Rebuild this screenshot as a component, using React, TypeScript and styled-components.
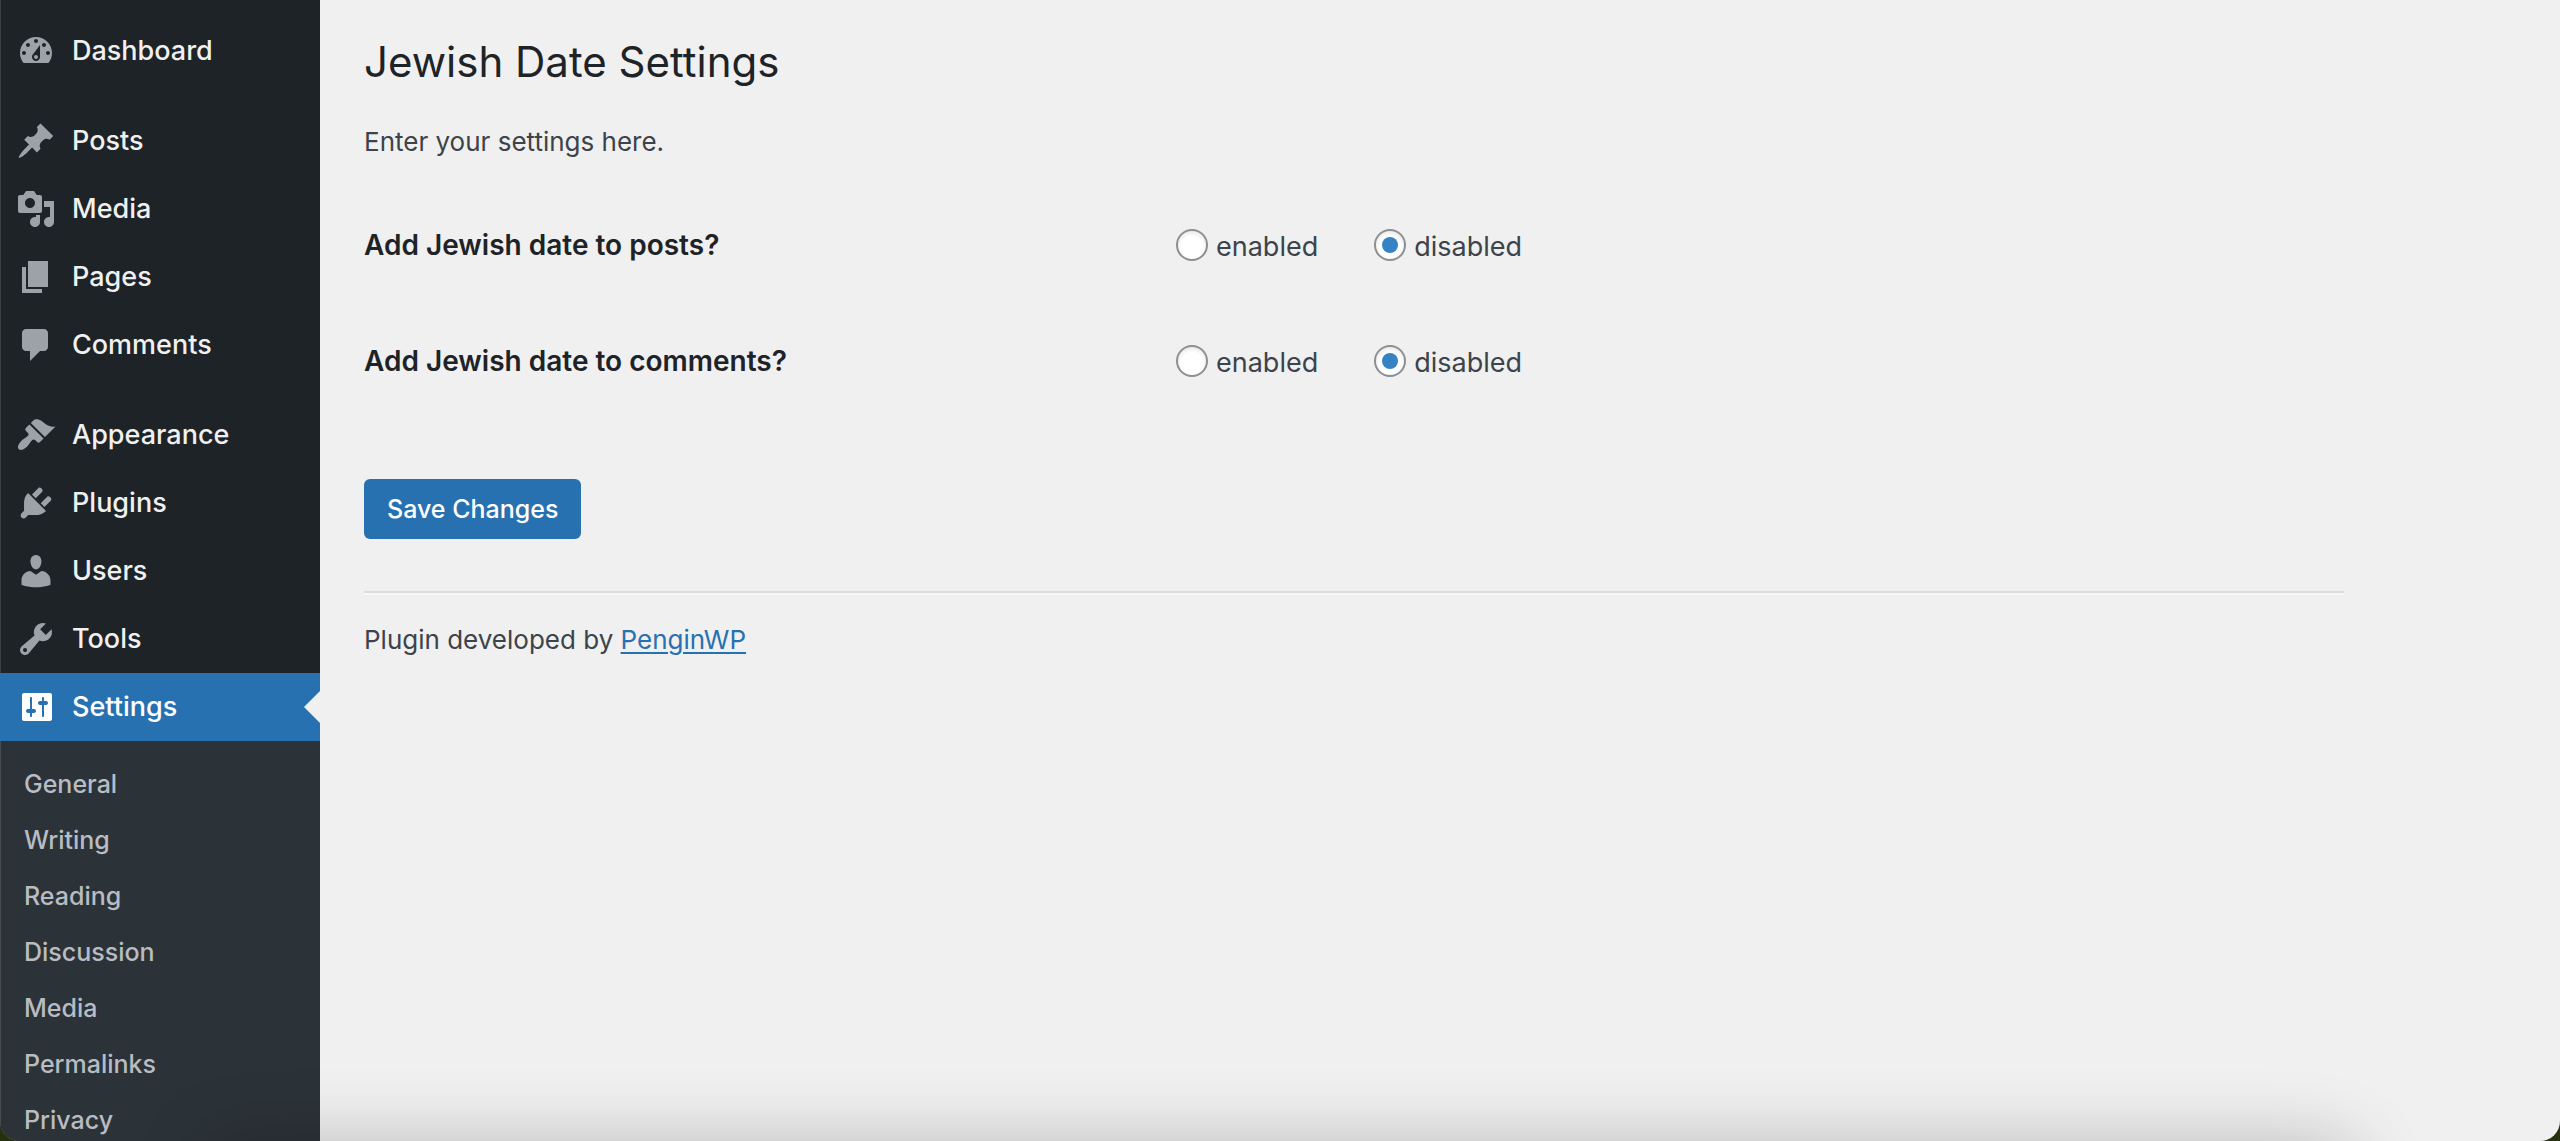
import { useId, useState } from "react";
import styled, { createGlobalStyle } from "styled-components";

const GlobalStyle = createGlobalStyle`
  *, *::before, *::after { box-sizing: border-box; }
  body {
    margin: 0;
    background: #f0f0f0;
    color: #3c434a;
    font-family: Inter, "Liberation Sans", sans-serif;
    font-size: 26px;
    line-height: 40px;
    overflow: hidden;
  }
`;

const Screen = styled.div`
  display: flex;
  height: 100vh;
  position: relative;
  overflow: hidden;
  background: #27300f;
`;

const Window = styled.div`
  display: flex;
  flex: 1;
  overflow: hidden;
  background: #f0f0f0;
  border-radius: 0 0 20px 20px;
`;

const DockShadow = styled.div`
  position: absolute;
  left: 200px;
  right: 200px;
  bottom: -100px;
  height: 100px;
  border-radius: 40px;
  box-shadow: 0 0 70px rgba(0, 0, 0, 0.22);
  pointer-events: none;
`;

const Sidebar = styled.nav`
  flex: 0 0 320px;
  background: #1d2327;
  box-shadow: inset 1px 0 #3a3f43;
  padding-top: 17px;
`;

const Menu = styled.ul`
  list-style: none;
  margin: 0;
  padding: 0;
`;

const MenuItem = styled.li<{ $gap?: boolean }>`
  margin-top: ${(p) => (p.$gap ? 22 : 0)}px;
`;

const MenuLink = styled.a<{ $current?: boolean }>`
  position: relative;
  display: flex;
  align-items: center;
  gap: 16px;
  height: 68px;
  padding-left: 16px;
  color: ${(p) => (p.$current ? "#fff" : "#f0f0f1")};
  background: ${(p) => (p.$current ? "#2871b1" : "transparent")};
  font-size: 27px;
  font-weight: 450;
  text-decoration: none;

  svg {
    flex: none;
    width: 40px;
    height: 40px;
    fill: ${(p) => (p.$current ? "#fff" : "#9ca2a7")};
  }

  &::after {
    content: ${(p) => (p.$current ? '""' : "none")};
    position: absolute;
    right: 0;
    border: 16px solid transparent;
    border-left-width: 0;
    border-right-color: #f0f0f0;
  }
`;

const SubMenu = styled.ul`
  list-style: none;
  margin: 0;
  padding: 15px 0 400px;
  background: #2c3338;
  box-shadow: inset 1px 0 #464c50;
`;

const SubLink = styled.a`
  display: block;
  padding: 8px 24px;
  color: #b9bcc2;
  font-size: 25px;
  font-weight: 450;
  text-decoration: none;
`;

const Main = styled.main`
  flex: 1;
  padding: 34px 216px 0 44px;
`;

const Title = styled.h1`
  margin: 0;
  color: #1d2327;
  font-size: 42px;
  font-weight: 400;
  line-height: 56px;
`;

const Text = styled.p`
  margin: 0;
`;

const Intro = styled(Text)`
  margin-top: 32px;
`;

const Options = styled.div`
  margin-top: 25px;
`;

const OptionRow = styled.fieldset`
  display: grid;
  grid-template-columns: 812px 1fr;
  align-items: center;
  height: 116px;
  margin: 0;
  padding: 0;
  border: 0;
`;

const OptionName = styled.span`
  color: #1d2327;
  font-size: 28px;
  font-weight: 600;
`;

const Choices = styled.div`
  display: flex;
  gap: 56px;
`;

const Choice = styled.label`
  display: flex;
  align-items: center;
  gap: 8px;
  font-size: 27px;
`;

const ChoiceText = styled.span`
  padding-top: 3px;
`;

const Radio = styled.input`
  appearance: none;
  display: grid;
  place-items: center;
  width: 32px;
  height: 32px;
  margin: 0;
  border: 2px solid #8c8f94;
  border-radius: 50%;
  background: #fff;
  box-shadow: inset 0 2px 4px rgba(0, 0, 0, 0.1);

  &:checked::before {
    content: "";
    width: 16px;
    height: 16px;
    border-radius: 50%;
    background: #3582c4;
  }
`;

const SaveButton = styled.button`
  display: block;
  height: 60px;
  margin-top: 60px;
  padding: 0 23px;
  border: 0;
  border-radius: 6px;
  background: #2871b1;
  color: #fff;
  font: 450 25px/40px Inter, "Liberation Sans", sans-serif;
`;

const Divider = styled.hr`
  height: 4px;
  margin: 52px 0 25px;
  border: solid;
  border-width: 2px 0;
  border-color: #dcdcdc transparent #f7f7f7;
`;

const Credit = styled.a`
  color: #2871b1;
  text-decoration-thickness: 2px;
  text-underline-offset: 3px;
`;

const ICONS = {
  dashboard:
    "M3.76 16h12.48c1.1-1.37 1.76-3.11 1.76-5 0-4.42-3.58-8-8-8s-8 3.58-8 8c0 1.89.66 3.63 1.76 5zM10 4c.55 0 1 .45 1 1s-.45 1-1 1-1-.45-1-1 .45-1 1-1zM6 6c.55 0 1 .45 1 1s-.45 1-1 1-1-.45-1-1 .45-1 1-1zm8 0c.55 0 1 .45 1 1s-.45 1-1 1-1-.45-1-1 .45-1 1-1zm-5.37 5.55L12 7v6c0 1.1-.9 2-2 2s-2-.9-2-2c0-.57.24-1.08.63-1.45zM4 10c.55 0 1 .45 1 1s-.45 1-1 1-1-.45-1-1 .45-1 1-1zm12 0c.55 0 1 .45 1 1s-.45 1-1 1-1-.45-1-1 .45-1 1-1zm-5 3c0-.55-.45-1-1-1s-1 .45-1 1 .45 1 1 1 1-.45 1-1z",
  posts:
    "M10.44 3.02l1.82-1.82 6.36 6.35-1.83 1.82c-1.05-.68-2.48-.57-3.41.36l-.75.75c-.92.93-1.04 2.35-.35 3.41l-1.83 1.82-2.41-2.41-2.8 2.79c-.42.42-3.38 2.71-3.8 2.29s1.86-3.39 2.28-3.81l2.79-2.79L4.1 9.36l1.83-1.82c1.05.69 2.48.57 3.4-.36l.75-.75c.93-.92 1.05-2.35.36-3.41z",
  media:
    "M13 11V4c0-.55-.45-1-1-1h-1.67L9 1H5L3.67 3H2c-.55 0-1 .45-1 1v7c0 .55.45 1 1 1h10c.55 0 1-.45 1-1zM7 4.5c1.38 0 2.5 1.12 2.5 2.5S8.38 9.5 7 9.5 4.5 8.38 4.5 7 5.62 4.5 7 4.5zM14 6h5v10.5c0 1.38-1.12 2.5-2.5 2.5S14 17.88 14 16.5s1.12-2.5 2.5-2.5c.17 0 .34.02.5.05V9h-3V6zm-4 8.05V13h2v3.5c0 1.38-1.12 2.5-2.5 2.5S7 17.88 7 16.5 8.12 14 9.5 14c.17 0 .34.02.5.05z",
  pages: "M6 15V2h10v13H6zm-1 1h8v2H3V5h2v11z",
  comments:
    "M5 2h9c1.1 0 2 .9 2 2v7c0 1.1-.9 2-2 2h-2l-5 5v-5H5c-1.1 0-2-.9-2-2V4c0-1.1.9-2 2-2z",
  appearance:
    "M14.48 11.06L7.41 3.99l1.5-1.5c.5-.56 2.3-.47 3.51.32 1.21.8 1.43 1.28 2.91 2.1 1.18.64 2.45 1.26 4.45.85zm-.71.71L6.7 4.7 4.93 6.47c-.39.39-.39 1.02 0 1.41l1.06 1.06c.39.39.39 1.03 0 1.42-.6.6-1.43 1.11-2.21 1.69-.35.26-.7.53-1.01.84C1.43 14.23.4 16.08 1.4 17.07c.99 1 2.84-.03 4.18-1.36.31-.31.58-.66.85-1.02.57-.78 1.08-1.61 1.69-2.21.39-.39 1.02-.39 1.41 0l1.06 1.06c.39.39 1.02.39 1.41 0z",
  plugins:
    "M13.11 4.36L9.87 7.6 8 5.73l3.24-3.24c.35-.34 1.05-.2 1.56.32.52.51.66 1.21.31 1.55zm-8 1.77l.91-1.12 9.01 9.01-1.19.84c-.71.71-2.63 1.16-3.82 1.16H6.14L4.9 17.26c-.59.59-1.54.59-2.12 0-.59-.58-.59-1.53 0-2.12l1.24-1.24v-3.88c0-1.13.4-3.19 1.09-3.89zm7.26 3.97l3.24-3.24c.34-.35 1.04-.21 1.55.31.52.51.66 1.21.31 1.55l-3.24 3.25z",
  users:
    "M10 9.25c-2.27 0-2.73-3.44-2.73-3.44C7 4.02 7.82 2 9.97 2c2.16 0 2.98 2.02 2.71 3.81 0 0-.41 3.44-2.68 3.44zm0 2.57L12.72 10c2.39 0 4.52 2.33 4.52 4.53v2.49s-3.65 1.13-7.24 1.13c-3.65 0-7.24-1.13-7.24-1.13v-2.49c0-2.25 1.94-4.48 4.47-4.48z",
  tools:
    "M16.68 9.77c-1.34 1.34-3.3 1.67-4.95.99l-5.41 6.52c-.99.99-2.59.99-3.58 0s-.99-2.59 0-3.57l6.52-5.42c-.68-1.65-.35-3.61.99-4.95 1.28-1.28 3.12-1.62 4.72-1.06l-2.89 2.89 2.82 2.82 2.86-2.87c.53 1.58.18 3.39-1.08 4.65zM3.81 16.21c.4.39 1.04.39 1.43 0 .4-.4.4-1.04 0-1.43-.39-.4-1.03-.4-1.43 0-.39.39-.39 1.03 0 1.43z",
  settings:
    "M18 16V4c0-.55-.45-1-1-1H4c-.55 0-1 .45-1 1v12c0 .55.45 1 1 1h13c.55 0 1-.45 1-1zM8 11h1c.55 0 1 .45 1 1s-.45 1-1 1H8v1.5c0 .28-.22.5-.5.5s-.5-.22-.5-.5V13H6c-.55 0-1-.45-1-1s.45-1 1-1h1V5.5c0-.28.22-.5.5-.5s.5.22.5.5V11zm5-2h-1c-.55 0-1-.45-1-1s.45-1 1-1h1V5.5c0-.28.22-.5.5-.5s.5.22.5.5V7h1c.55 0 1 .45 1 1s-.45 1-1 1h-1v5.5c0 .28-.22.5-.5.5s-.5-.22-.5-.5V9z",
};

type Entry = {
  label: string;
  icon: keyof typeof ICONS;
  gap?: boolean;
  current?: boolean;
};

const ENTRIES: Entry[] = [
  { label: "Dashboard", icon: "dashboard" },
  { label: "Posts", icon: "posts", gap: true },
  { label: "Media", icon: "media" },
  { label: "Pages", icon: "pages" },
  { label: "Comments", icon: "comments" },
  { label: "Appearance", icon: "appearance", gap: true },
  { label: "Plugins", icon: "plugins" },
  { label: "Users", icon: "users" },
  { label: "Tools", icon: "tools" },
  { label: "Settings", icon: "settings", current: true },
];

const SETTINGS_PAGES = [
  "General",
  "Writing",
  "Reading",
  "Discussion",
  "Media",
  "Permalinks",
  "Privacy",
];

function Option({ name }: { name: string }) {
  const id = useId();
  const [value, setValue] = useState("disabled");
  return (
    <OptionRow aria-labelledby={id}>
      <OptionName id={id}>{name}</OptionName>
      <Choices>
        {["enabled", "disabled"].map((choice) => (
          <Choice key={choice}>
            <Radio
              type="radio"
              name={id + "-choice"}
              value={choice}
              checked={value === choice}
              onChange={() => setValue(choice)}
            />
            <ChoiceText>{choice}</ChoiceText>
          </Choice>
        ))}
      </Choices>
    </OptionRow>
  );
}

export default function App() {
  return (
    <Screen>
      <GlobalStyle />
      <Window>
        <Sidebar>
          <Menu>
            {ENTRIES.map(({ label, icon, gap, current }) => (
              <MenuItem key={label} $gap={gap}>
                <MenuLink href="#" $current={current}>
                  <svg viewBox="0 0 20 20" aria-hidden="true">
                    <path d={ICONS[icon]} fillRule="evenodd" />
                  </svg>
                  {label}
                </MenuLink>
                {current && (
                  <SubMenu>
                    {SETTINGS_PAGES.map((page) => (
                      <li key={page}>
                        <SubLink href="#">{page}</SubLink>
                      </li>
                    ))}
                  </SubMenu>
                )}
              </MenuItem>
            ))}
          </Menu>
        </Sidebar>
        <Main>
          <Title>Jewish Date Settings</Title>
          <Intro>Enter your settings here.</Intro>
          <form onSubmit={(e) => e.preventDefault()}>
            <Options>
              <Option name="Add Jewish date to posts?" />
              <Option name="Add Jewish date to comments?" />
            </Options>
            <SaveButton type="submit">Save Changes</SaveButton>
          </form>
          <Divider />
          <Text>
            Plugin developed by <Credit href="#">PenginWP</Credit>
          </Text>
        </Main>
      </Window>
      <DockShadow />
    </Screen>
  );
}
